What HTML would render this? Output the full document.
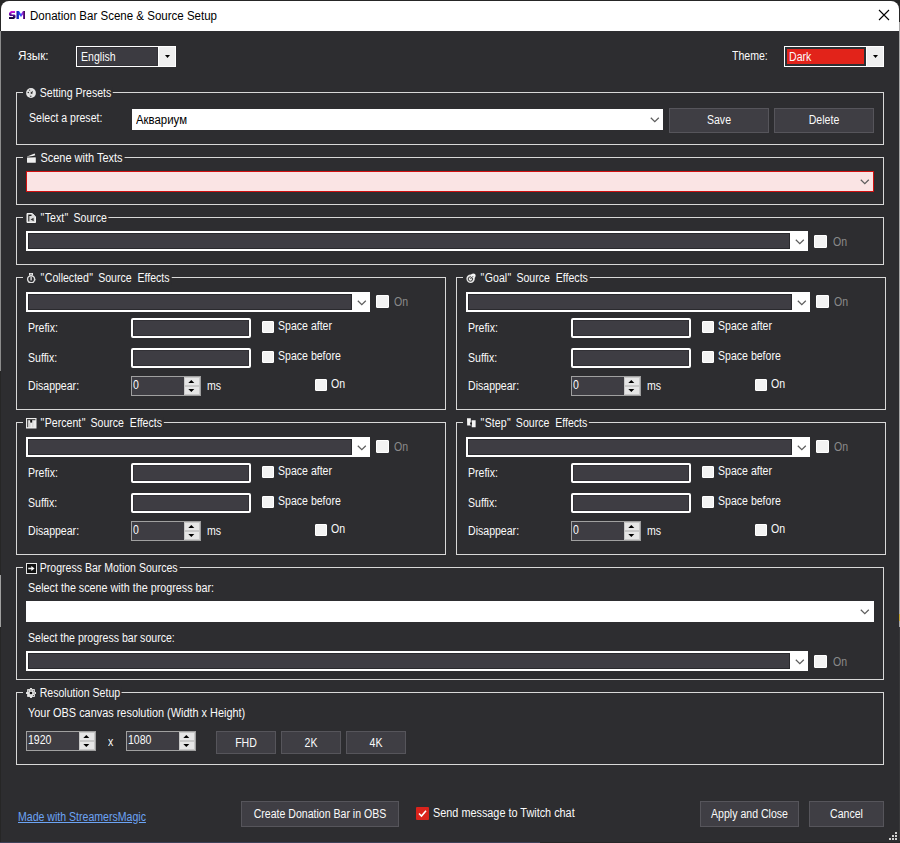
<!DOCTYPE html><html><head><meta charset="utf-8"><style>
html,body{margin:0;padding:0;width:900px;height:843px;overflow:hidden;background:#262626}
.a{position:absolute}
.t{position:absolute;font-family:"Liberation Sans",sans-serif;font-size:12px;line-height:13px;color:#fafafa;white-space:nowrap;transform:scaleX(0.88);transform-origin:0 0}
.tc{transform-origin:50% 0}
.q{letter-spacing:2.5px;margin-left:0.5px}
.q1{margin-left:1px;letter-spacing:0.5px}
#win{position:absolute;left:1px;top:1px;width:898px;height:841px;background:#2d2d30;border-radius:8px 8px 0 0;overflow:hidden}

</style></head><body>
<div class="a" style="left:0px;top:842px;width:540px;height:1px;background:#3d4158;"></div>
<div class="a" style="left:540px;top:842px;width:360px;height:1px;background:#262628;"></div>
<div id="win"></div>
<div class="a" style="left:0px;top:31px;width:1px;height:340px;background:#8c8c8c;"></div>
<div class="a" style="left:0px;top:575px;width:1px;height:52px;background:#a0a0a0;"></div>
<div class="a" style="left:899px;top:22px;width:1px;height:605px;background:#a8a8a8;"></div>
<div class="a" style="left:899px;top:614px;width:1px;height:7px;background:#c8a830;"></div>
<div class="a" style="left:899px;top:627px;width:1px;height:214px;background:#38383a;"></div>
<div class="a" style="left:1px;top:1px;width:898px;height:30px;background:#ffffff;border-radius:8px 8px 0 0;"></div>
<svg class="a" style="left:8px;top:10px" width="18" height="10" viewBox="0 0 18 10"><defs><linearGradient id="gs" x1="0" y1="0" x2="0" y2="1"><stop offset="0" stop-color="#e21ee6"/><stop offset="0.45" stop-color="#5a10a0"/><stop offset="1" stop-color="#0a0628"/></linearGradient><linearGradient id="gm" x1="0" y1="0" x2="1" y2="0"><stop offset="0" stop-color="#1a10a0"/><stop offset="0.45" stop-color="#2060ff"/><stop offset="0.7" stop-color="#9a28e0"/><stop offset="1" stop-color="#300840"/></linearGradient></defs><path d="M7 1 H3 L1 3 V5 L2 6 H5 V7 H1 V9 H6 L7.5 7.5 V5.5 L6.5 4.5 H3.5 V3 H7 Z" fill="url(#gs)"/><path d="M8.5 9 V1 H11 L13 4 L15 1 H17 V9 H15 V4.5 L13 7 L11 4.5 V9 Z" fill="url(#gm)"/></svg>
<div class="t" style="left:30px;top:8px;font-size:12px;line-height:16px;color:#000;transform:scaleX(0.96)">Donation Bar Scene &amp; Source Setup</div>
<svg class="a" style="left:878px;top:9px" width="12" height="12" viewBox="0 0 12 12"><path d="M1 1 L11 11 M11 1 L1 11" stroke="#000" stroke-width="1.1"/></svg>
<div class="t" style="left:18px;top:50.34px;transform:scaleX(0.975);">Язык:</div>
<div class="a" style="left:76px;top:46px;width:100px;height:21px;background:#fff;"></div>
<div class="a" style="left:77px;top:47px;width:81px;height:19px;background:#333237;"></div>
<div class="a" style="left:78px;top:48px;width:79px;height:17px;background:#3c3b41;"></div>
<div class="a" style="left:159px;top:47px;width:16px;height:19px;background:#efefef;"></div>
<svg class="a" style="left:165px;top:55px" width="5" height="3"><path d="M0 0 H5 L2.5 3 Z" fill="#000"/></svg>
<div class="t" style="left:81px;top:51.34px;">English</div>
<div class="t" style="left:732px;top:50.34px;">Theme:</div>
<div class="a" style="left:784px;top:46px;width:100px;height:21px;background:#fff;"></div>
<div class="a" style="left:785px;top:47px;width:81px;height:19px;background:#2b3034;"></div>
<div class="a" style="left:787px;top:49px;width:77px;height:15px;background:#e2231a;"></div>
<div class="a" style="left:867px;top:47px;width:16px;height:19px;background:#efefef;"></div>
<svg class="a" style="left:873px;top:55px" width="5" height="3"><path d="M0 0 H5 L2.5 3 Z" fill="#000"/></svg>
<div class="t" style="left:789px;top:51.34px;">Dark</div>
<div class="a" style="left:16px;top:92px;width:868px;height:53px;border:1px solid #d8d8d8;box-sizing:border-box;"></div>
<div class="t" style="left:23px;top:87.34px;background:#2d2d30;padding-left:19px;padding-right:2px;">Setting Presets</div>
<div class="a" style="left:26px;top:88px;width:10px;height:10px;line-height:0"><svg style="display:block" width="10" height="10" viewBox="0 0 10 10"><circle cx="5" cy="5" r="4.9" fill="#e6e6e6"/><circle cx="2.3" cy="4.5" r="0.8" fill="#2a2a2a"/><circle cx="3.5" cy="2.2" r="0.6" fill="#555"/><path d="M4.2 5 L6.8 2.8 L6.2 6.2 Z" fill="#222"/><circle cx="4.8" cy="8.2" r="0.7" fill="#333"/><path d="M5 1 L3.6 8.6" stroke="#bbb" stroke-width="0.6"/></svg></div>
<div class="t" style="left:29px;top:112.34px;">Select a preset:</div>
<div class="a" style="left:132px;top:109px;width:531px;height:21px;background:#fff;"></div>
<svg class="a" style="left:650px;top:117px" width="10" height="6" viewBox="0 0 10 6"><path d="M0.8 0.8 L4.8 4.6 L8.8 0.8" fill="none" stroke="#5e5e5e" stroke-width="1.25"/></svg>
<div class="t" style="left:136px;top:114.34px;color:#000;transform:scaleX(0.95)">Аквариум</div>
<div class="a" style="left:669px;top:108px;width:100px;height:25px;background:#3f3e44;border:1px solid #56555b;box-sizing:border-box;"></div>
<div class="t tc" style="left:669px;top:114.34px;width:100px;text-align:center">Save</div>
<div class="a" style="left:774px;top:108px;width:100px;height:25px;background:#3f3e44;border:1px solid #56555b;box-sizing:border-box;"></div>
<div class="t tc" style="left:774px;top:114.34px;width:100px;text-align:center">Delete</div>
<div class="a" style="left:16px;top:157px;width:868px;height:48px;border:1px solid #d8d8d8;box-sizing:border-box;"></div>
<div class="t" style="left:23px;top:152.34px;background:#2d2d30;padding-left:19px;padding-right:2px;transform:scaleX(0.915)">Scene with Texts</div>
<div class="a" style="left:26px;top:153px;width:10px;height:10px;line-height:0"><svg style="display:block" width="10" height="10" viewBox="0 0 10 10"><rect x="1" y="4.2" width="8.8" height="5.6" rx="0.6" fill="#f0f0f0"/><path d="M1 3.4 L8.6 0.6 L9.3 2.2 L1.6 4.4 Z" fill="#f0f0f0"/><path d="M1.2 4 L9 3.6" stroke="#222" stroke-width="0.8"/></svg></div>
<div class="a" style="left:26px;top:171px;width:848px;height:21px;background:#fae4e4;border:1px solid #d01010;box-sizing:border-box;"></div>
<svg class="a" style="left:860px;top:179px" width="10" height="6" viewBox="0 0 10 6"><path d="M0.8 0.8 L4.8 4.6 L8.8 0.8" fill="none" stroke="#5e5e5e" stroke-width="1.25"/></svg>
<div class="a" style="left:16px;top:217px;width:868px;height:48px;border:1px solid #d8d8d8;box-sizing:border-box;"></div>
<div class="t" style="left:23px;top:212.34px;background:#2d2d30;padding-left:19px;padding-right:2px;"><span class="q1">"</span>Text<span class="q">"</span> Source</div>
<div class="a" style="left:26px;top:213px;width:10px;height:10px;line-height:0"><svg style="display:block" width="10" height="10" viewBox="0 0 10 10"><path d="M1 0.5 H6.3 L9.5 3.8 V9.5 H1 Z" fill="#dcdcdc" stroke="#f2f2f2" stroke-width="1"/><rect x="2.3" y="1.6" width="3.2" height="1.4" fill="#1a1a1a"/><rect x="2.3" y="3" width="1" height="5.4" fill="#1a1a1a"/><path d="M4.5 6.5 L7.5 4.8 L7.8 8.2 Z" fill="#333"/></svg></div>
<div class="a" style="left:26px;top:231px;width:782px;height:20px;background:#ffffff;"></div>
<div class="a" style="left:28px;top:233px;width:762px;height:16px;background:#2a2a2e;"></div>
<div class="a" style="left:29px;top:234px;width:760px;height:14px;background:#3e3d43;"></div>
<svg class="a" style="left:795px;top:239px" width="10" height="6" viewBox="0 0 10 6"><path d="M0.8 0.8 L4.8 4.6 L8.8 0.8" fill="none" stroke="#5e5e5e" stroke-width="1.25"/></svg>
<div class="a" style="left:814px;top:235px;width:13px;height:13px;background:#f3f3f3;border:1px solid #fff;box-sizing:border-box;border-radius:1px"></div>
<div class="t" style="left:833px;top:236.34px;color:#8a8a8a;">On</div>
<div class="a" style="left:16px;top:277px;width:430px;height:133px;border:1px solid #d8d8d8;box-sizing:border-box;"></div>
<div class="t" style="left:23px;top:272.34px;background:#2d2d30;padding-left:19px;padding-right:2px;"><span class="q1">"</span>Collected<span class="q">"</span> Source&nbsp; Effects</div>
<div class="a" style="left:26px;top:273px;width:10px;height:10px;line-height:0"><svg style="display:block" width="10" height="10" viewBox="0 0 10 10"><rect x="3" y="0" width="4" height="2.4" fill="#e8e8e8"/><rect x="4" y="0.8" width="2" height="1" fill="#888"/><circle cx="5.1" cy="6.3" r="3.5" fill="none" stroke="#dedede" stroke-width="1.4"/><rect x="4.4" y="3.6" width="1.4" height="3.8" fill="#d8d8d8"/><path d="M8.6 6.8 H9.6" stroke="#ccc" stroke-width="1"/></svg></div>
<div class="a" style="left:26px;top:292px;width:344px;height:20px;background:#ffffff;"></div>
<div class="a" style="left:28px;top:294px;width:324px;height:16px;background:#2a2a2e;"></div>
<div class="a" style="left:29px;top:295px;width:322px;height:14px;background:#3e3d43;"></div>
<svg class="a" style="left:357px;top:300px" width="10" height="6" viewBox="0 0 10 6"><path d="M0.8 0.8 L4.8 4.6 L8.8 0.8" fill="none" stroke="#5e5e5e" stroke-width="1.25"/></svg>
<div class="a" style="left:376px;top:295px;width:13px;height:13px;background:#f3f3f3;border:1px solid #fff;box-sizing:border-box;border-radius:1px"></div>
<div class="t" style="left:394px;top:296.34px;color:#8a8a8a;">On</div>
<div class="t" style="left:28px;top:322.34px;">Prefix:</div>
<div class="a" style="left:131px;top:318px;width:120px;height:20px;background:#3e3d43;border:2px solid #fff;border-radius:2px;box-sizing:border-box;box-shadow:inset 0 0 0 1px #323136;"></div>
<div class="a" style="left:262px;top:321px;width:12px;height:12px;background:#f3f3f3;border:1px solid #fff;box-sizing:border-box;border-radius:1px"></div>
<div class="t" style="left:278px;top:320.34px;">Space after</div>
<div class="t" style="left:28px;top:352.34px;">Suffix:</div>
<div class="a" style="left:131px;top:348px;width:120px;height:20px;background:#3e3d43;border:2px solid #fff;border-radius:2px;box-sizing:border-box;box-shadow:inset 0 0 0 1px #323136;"></div>
<div class="a" style="left:262px;top:351px;width:12px;height:12px;background:#f3f3f3;border:1px solid #fff;box-sizing:border-box;border-radius:1px"></div>
<div class="t" style="left:278px;top:350.34px;">Space before</div>
<div class="t" style="left:28px;top:380.34px;">Disappear:</div>
<div class="a" style="left:131px;top:376px;width:70px;height:20px;background:#3e3d43;border:1px solid #a0a0a0;box-sizing:border-box;"></div>
<div class="a" style="left:184px;top:377px;width:16px;height:9px;background:#e6e6e6;border:1px solid #c8c8c8;box-sizing:border-box;"></div>
<div class="a" style="left:184px;top:386px;width:16px;height:9px;background:#e6e6e6;border:1px solid #c8c8c8;box-sizing:border-box;"></div>
<svg class="a" style="left:184px;top:377px" width="16" height="18" viewBox="0 0 16 18"><path d="M4.3 6 L7.3 3 L10.3 6 Z" fill="#000"/><path d="M4.3 12 L7.3 15 L10.3 12 Z" fill="#000"/></svg>
<div class="t" style="left:133px;top:379.34px;">0</div>
<div class="t" style="left:207px;top:380.34px;">ms</div>
<div class="a" style="left:315px;top:379px;width:12px;height:12px;background:#f3f3f3;border:1px solid #fff;box-sizing:border-box;border-radius:1px"></div>
<div class="t" style="left:331px;top:378.34px;">On</div>
<div class="a" style="left:456px;top:277px;width:430px;height:133px;border:1px solid #d8d8d8;box-sizing:border-box;"></div>
<div class="t" style="left:463px;top:272.34px;background:#2d2d30;padding-left:19px;padding-right:2px;"><span class="q1">"</span>Goal<span class="q">"</span> Source&nbsp; Effects</div>
<div class="a" style="left:466px;top:273px;width:10px;height:10px;line-height:0"><svg style="display:block" width="10" height="10" viewBox="0 0 10 10"><circle cx="4.6" cy="5.7" r="4.2" fill="#e8e8e8"/><circle cx="4.4" cy="6" r="2.2" fill="none" stroke="#2a2a2a" stroke-width="0.9"/><circle cx="7.3" cy="2.8" r="2.4" fill="#f4f4f4"/><path d="M4.4 6 L7 3.3" stroke="#2a2a2a" stroke-width="0.9"/></svg></div>
<div class="a" style="left:466px;top:292px;width:344px;height:20px;background:#ffffff;"></div>
<div class="a" style="left:468px;top:294px;width:324px;height:16px;background:#2a2a2e;"></div>
<div class="a" style="left:469px;top:295px;width:322px;height:14px;background:#3e3d43;"></div>
<svg class="a" style="left:797px;top:300px" width="10" height="6" viewBox="0 0 10 6"><path d="M0.8 0.8 L4.8 4.6 L8.8 0.8" fill="none" stroke="#5e5e5e" stroke-width="1.25"/></svg>
<div class="a" style="left:816px;top:295px;width:13px;height:13px;background:#f3f3f3;border:1px solid #fff;box-sizing:border-box;border-radius:1px"></div>
<div class="t" style="left:834px;top:296.34px;color:#8a8a8a;">On</div>
<div class="t" style="left:468px;top:322.34px;">Prefix:</div>
<div class="a" style="left:571px;top:318px;width:120px;height:20px;background:#3e3d43;border:2px solid #fff;border-radius:2px;box-sizing:border-box;box-shadow:inset 0 0 0 1px #323136;"></div>
<div class="a" style="left:702px;top:321px;width:12px;height:12px;background:#f3f3f3;border:1px solid #fff;box-sizing:border-box;border-radius:1px"></div>
<div class="t" style="left:718px;top:320.34px;">Space after</div>
<div class="t" style="left:468px;top:352.34px;">Suffix:</div>
<div class="a" style="left:571px;top:348px;width:120px;height:20px;background:#3e3d43;border:2px solid #fff;border-radius:2px;box-sizing:border-box;box-shadow:inset 0 0 0 1px #323136;"></div>
<div class="a" style="left:702px;top:351px;width:12px;height:12px;background:#f3f3f3;border:1px solid #fff;box-sizing:border-box;border-radius:1px"></div>
<div class="t" style="left:718px;top:350.34px;">Space before</div>
<div class="t" style="left:468px;top:380.34px;">Disappear:</div>
<div class="a" style="left:571px;top:376px;width:70px;height:20px;background:#3e3d43;border:1px solid #a0a0a0;box-sizing:border-box;"></div>
<div class="a" style="left:624px;top:377px;width:16px;height:9px;background:#e6e6e6;border:1px solid #c8c8c8;box-sizing:border-box;"></div>
<div class="a" style="left:624px;top:386px;width:16px;height:9px;background:#e6e6e6;border:1px solid #c8c8c8;box-sizing:border-box;"></div>
<svg class="a" style="left:624px;top:377px" width="16" height="18" viewBox="0 0 16 18"><path d="M4.3 6 L7.3 3 L10.3 6 Z" fill="#000"/><path d="M4.3 12 L7.3 15 L10.3 12 Z" fill="#000"/></svg>
<div class="t" style="left:573px;top:379.34px;">0</div>
<div class="t" style="left:647px;top:380.34px;">ms</div>
<div class="a" style="left:755px;top:379px;width:12px;height:12px;background:#f3f3f3;border:1px solid #fff;box-sizing:border-box;border-radius:1px"></div>
<div class="t" style="left:771px;top:378.34px;">On</div>
<div class="a" style="left:16px;top:422px;width:430px;height:133px;border:1px solid #d8d8d8;box-sizing:border-box;"></div>
<div class="t" style="left:23px;top:417.34px;background:#2d2d30;padding-left:19px;padding-right:2px;"><span class="q1">"</span>Percent<span class="q">"</span> Source&nbsp; Effects</div>
<div class="a" style="left:26px;top:418px;width:10px;height:10px;line-height:0"><svg style="display:block" width="11" height="11" viewBox="0 0 11 11"><rect x="0" y="0" width="10.5" height="10.5" fill="#ececec"/><rect x="1.2" y="1.2" width="8.2" height="1" fill="#222"/><rect x="1.2" y="1.2" width="1" height="8" fill="#333"/><rect x="4.2" y="2" width="2" height="2.6" fill="#111"/><rect x="3.6" y="4.6" width="0.6" height="4.6" fill="#aaa"/><rect x="6.6" y="2.2" width="0.6" height="7" fill="#bbb"/></svg></div>
<div class="a" style="left:26px;top:437px;width:344px;height:20px;background:#ffffff;"></div>
<div class="a" style="left:28px;top:439px;width:324px;height:16px;background:#2a2a2e;"></div>
<div class="a" style="left:29px;top:440px;width:322px;height:14px;background:#3e3d43;"></div>
<svg class="a" style="left:357px;top:445px" width="10" height="6" viewBox="0 0 10 6"><path d="M0.8 0.8 L4.8 4.6 L8.8 0.8" fill="none" stroke="#5e5e5e" stroke-width="1.25"/></svg>
<div class="a" style="left:376px;top:440px;width:13px;height:13px;background:#f3f3f3;border:1px solid #fff;box-sizing:border-box;border-radius:1px"></div>
<div class="t" style="left:394px;top:441.34px;color:#8a8a8a;">On</div>
<div class="t" style="left:28px;top:467.34px;">Prefix:</div>
<div class="a" style="left:131px;top:463px;width:120px;height:20px;background:#3e3d43;border:2px solid #fff;border-radius:2px;box-sizing:border-box;box-shadow:inset 0 0 0 1px #323136;"></div>
<div class="a" style="left:262px;top:466px;width:12px;height:12px;background:#f3f3f3;border:1px solid #fff;box-sizing:border-box;border-radius:1px"></div>
<div class="t" style="left:278px;top:465.34px;">Space after</div>
<div class="t" style="left:28px;top:497.34px;">Suffix:</div>
<div class="a" style="left:131px;top:493px;width:120px;height:20px;background:#3e3d43;border:2px solid #fff;border-radius:2px;box-sizing:border-box;box-shadow:inset 0 0 0 1px #323136;"></div>
<div class="a" style="left:262px;top:496px;width:12px;height:12px;background:#f3f3f3;border:1px solid #fff;box-sizing:border-box;border-radius:1px"></div>
<div class="t" style="left:278px;top:495.34px;">Space before</div>
<div class="t" style="left:28px;top:525.34px;">Disappear:</div>
<div class="a" style="left:131px;top:521px;width:70px;height:20px;background:#3e3d43;border:1px solid #a0a0a0;box-sizing:border-box;"></div>
<div class="a" style="left:184px;top:522px;width:16px;height:9px;background:#e6e6e6;border:1px solid #c8c8c8;box-sizing:border-box;"></div>
<div class="a" style="left:184px;top:531px;width:16px;height:9px;background:#e6e6e6;border:1px solid #c8c8c8;box-sizing:border-box;"></div>
<svg class="a" style="left:184px;top:522px" width="16" height="18" viewBox="0 0 16 18"><path d="M4.3 6 L7.3 3 L10.3 6 Z" fill="#000"/><path d="M4.3 12 L7.3 15 L10.3 12 Z" fill="#000"/></svg>
<div class="t" style="left:133px;top:524.34px;">0</div>
<div class="t" style="left:207px;top:525.34px;">ms</div>
<div class="a" style="left:315px;top:524px;width:12px;height:12px;background:#f3f3f3;border:1px solid #fff;box-sizing:border-box;border-radius:1px"></div>
<div class="t" style="left:331px;top:523.34px;">On</div>
<div class="a" style="left:456px;top:422px;width:430px;height:133px;border:1px solid #d8d8d8;box-sizing:border-box;"></div>
<div class="t" style="left:463px;top:417.34px;background:#2d2d30;padding-left:19px;padding-right:2px;"><span class="q1">"</span>Step<span class="q">"</span> Source&nbsp; Effects</div>
<div class="a" style="left:466px;top:418px;width:10px;height:10px;line-height:0"><svg style="display:block" width="10" height="10" viewBox="0 0 10 10"><path d="M1 0.3 H4.8 V7.6 H1.2 Z" fill="#f4f4f4"/><path d="M5.6 2.3 H9.6 V9.2 H5.8 Z" fill="#f4f4f4"/><rect x="4.2" y="4.5" width="1.6" height="2" fill="#111"/></svg></div>
<div class="a" style="left:466px;top:437px;width:344px;height:20px;background:#ffffff;"></div>
<div class="a" style="left:468px;top:439px;width:324px;height:16px;background:#2a2a2e;"></div>
<div class="a" style="left:469px;top:440px;width:322px;height:14px;background:#3e3d43;"></div>
<svg class="a" style="left:797px;top:445px" width="10" height="6" viewBox="0 0 10 6"><path d="M0.8 0.8 L4.8 4.6 L8.8 0.8" fill="none" stroke="#5e5e5e" stroke-width="1.25"/></svg>
<div class="a" style="left:816px;top:440px;width:13px;height:13px;background:#f3f3f3;border:1px solid #fff;box-sizing:border-box;border-radius:1px"></div>
<div class="t" style="left:834px;top:441.34px;color:#8a8a8a;">On</div>
<div class="t" style="left:468px;top:467.34px;">Prefix:</div>
<div class="a" style="left:571px;top:463px;width:120px;height:20px;background:#3e3d43;border:2px solid #fff;border-radius:2px;box-sizing:border-box;box-shadow:inset 0 0 0 1px #323136;"></div>
<div class="a" style="left:702px;top:466px;width:12px;height:12px;background:#f3f3f3;border:1px solid #fff;box-sizing:border-box;border-radius:1px"></div>
<div class="t" style="left:718px;top:465.34px;">Space after</div>
<div class="t" style="left:468px;top:497.34px;">Suffix:</div>
<div class="a" style="left:571px;top:493px;width:120px;height:20px;background:#3e3d43;border:2px solid #fff;border-radius:2px;box-sizing:border-box;box-shadow:inset 0 0 0 1px #323136;"></div>
<div class="a" style="left:702px;top:496px;width:12px;height:12px;background:#f3f3f3;border:1px solid #fff;box-sizing:border-box;border-radius:1px"></div>
<div class="t" style="left:718px;top:495.34px;">Space before</div>
<div class="t" style="left:468px;top:525.34px;">Disappear:</div>
<div class="a" style="left:571px;top:521px;width:70px;height:20px;background:#3e3d43;border:1px solid #a0a0a0;box-sizing:border-box;"></div>
<div class="a" style="left:624px;top:522px;width:16px;height:9px;background:#e6e6e6;border:1px solid #c8c8c8;box-sizing:border-box;"></div>
<div class="a" style="left:624px;top:531px;width:16px;height:9px;background:#e6e6e6;border:1px solid #c8c8c8;box-sizing:border-box;"></div>
<svg class="a" style="left:624px;top:522px" width="16" height="18" viewBox="0 0 16 18"><path d="M4.3 6 L7.3 3 L10.3 6 Z" fill="#000"/><path d="M4.3 12 L7.3 15 L10.3 12 Z" fill="#000"/></svg>
<div class="t" style="left:573px;top:524.34px;">0</div>
<div class="t" style="left:647px;top:525.34px;">ms</div>
<div class="a" style="left:755px;top:524px;width:12px;height:12px;background:#f3f3f3;border:1px solid #fff;box-sizing:border-box;border-radius:1px"></div>
<div class="t" style="left:771px;top:523.34px;">On</div>
<div class="a" style="left:16px;top:567px;width:868px;height:113px;border:1px solid #d8d8d8;box-sizing:border-box;"></div>
<div class="t" style="left:23px;top:562.34px;background:#2d2d30;padding-left:19px;padding-right:2px;">Progress Bar Motion Sources</div>
<div class="a" style="left:26px;top:563px;width:10px;height:10px;line-height:0"><svg style="display:block" width="11" height="11" viewBox="0 0 11 11"><rect x="0.5" y="0.5" width="10" height="10" fill="#111" stroke="#e6e6e6" stroke-width="1"/><path d="M2.2 5.5 H6.5" stroke="#eee" stroke-width="1.6"/><path d="M5.3 3 L8.6 5.5 L5.3 8 Z" fill="#f4f4f4"/></svg></div>
<div class="t" style="left:28px;top:582.34px;transform:scaleX(0.897);">Select the scene with the progress bar:</div>
<div class="a" style="left:26px;top:601px;width:848px;height:21px;background:#fff;"></div>
<svg class="a" style="left:860px;top:609px" width="10" height="6" viewBox="0 0 10 6"><path d="M0.8 0.8 L4.8 4.6 L8.8 0.8" fill="none" stroke="#5e5e5e" stroke-width="1.25"/></svg>
<div class="t" style="left:28px;top:632.34px;">Select the progress bar source:</div>
<div class="a" style="left:26px;top:651px;width:782px;height:20px;background:#ffffff;"></div>
<div class="a" style="left:28px;top:653px;width:762px;height:16px;background:#2a2a2e;"></div>
<div class="a" style="left:29px;top:654px;width:760px;height:14px;background:#3e3d43;"></div>
<svg class="a" style="left:795px;top:659px" width="10" height="6" viewBox="0 0 10 6"><path d="M0.8 0.8 L4.8 4.6 L8.8 0.8" fill="none" stroke="#5e5e5e" stroke-width="1.25"/></svg>
<div class="a" style="left:814px;top:655px;width:13px;height:13px;background:#f3f3f3;border:1px solid #fff;box-sizing:border-box;border-radius:1px"></div>
<div class="t" style="left:833px;top:656.34px;color:#8a8a8a;">On</div>
<div class="a" style="left:16px;top:692px;width:868px;height:73px;border:1px solid #d8d8d8;box-sizing:border-box;"></div>
<div class="t" style="left:23px;top:687.34px;background:#2d2d30;padding-left:19px;padding-right:2px;">Resolution Setup</div>
<div class="a" style="left:26px;top:688px;width:10px;height:10px;line-height:0"><svg style="display:block" width="10" height="10" viewBox="0 0 10 10"><circle cx="5" cy="5" r="4.2" fill="#e0e0e0"/><circle cx="5" cy="0.9" r="1.1" fill="#e8e8e8"/><circle cx="5" cy="9.1" r="1.1" fill="#e8e8e8"/><circle cx="0.9" cy="5" r="1.1" fill="#e8e8e8"/><circle cx="9.1" cy="5" r="1.1" fill="#e8e8e8"/><circle cx="2.1" cy="2.1" r="1.1" fill="#e8e8e8"/><circle cx="7.9" cy="2.1" r="1.1" fill="#e8e8e8"/><circle cx="2.1" cy="7.9" r="1.1" fill="#e8e8e8"/><circle cx="7.9" cy="7.9" r="1.1" fill="#e8e8e8"/><circle cx="5" cy="5" r="1.3" fill="#111"/><circle cx="5" cy="1.9" r="0.5" fill="#222"/><circle cx="7.4" cy="2.8" r="0.5" fill="#333"/><circle cx="8.1" cy="5" r="0.5" fill="#333"/><circle cx="7.4" cy="7.5" r="0.5" fill="#222"/><circle cx="2.5" cy="3" r="0.5" fill="#555"/></svg></div>
<div class="t" style="left:28px;top:707.34px;transform:scaleX(0.909);">Your OBS canvas resolution (Width x Height)</div>
<div class="a" style="left:26px;top:731px;width:70px;height:20px;background:#3e3d43;border:1px solid #a0a0a0;box-sizing:border-box;"></div>
<div class="a" style="left:79px;top:732px;width:16px;height:9px;background:#e6e6e6;border:1px solid #c8c8c8;box-sizing:border-box;"></div>
<div class="a" style="left:79px;top:741px;width:16px;height:9px;background:#e6e6e6;border:1px solid #c8c8c8;box-sizing:border-box;"></div>
<svg class="a" style="left:79px;top:732px" width="16" height="18" viewBox="0 0 16 18"><path d="M4.3 6 L7.3 3 L10.3 6 Z" fill="#000"/><path d="M4.3 12 L7.3 15 L10.3 12 Z" fill="#000"/></svg>
<div class="t" style="left:28px;top:734.34px;">1920</div>
<div class="t" style="left:108px;top:736.34px;">x</div>
<div class="a" style="left:126px;top:731px;width:70px;height:20px;background:#3e3d43;border:1px solid #a0a0a0;box-sizing:border-box;"></div>
<div class="a" style="left:179px;top:732px;width:16px;height:9px;background:#e6e6e6;border:1px solid #c8c8c8;box-sizing:border-box;"></div>
<div class="a" style="left:179px;top:741px;width:16px;height:9px;background:#e6e6e6;border:1px solid #c8c8c8;box-sizing:border-box;"></div>
<svg class="a" style="left:179px;top:732px" width="16" height="18" viewBox="0 0 16 18"><path d="M4.3 6 L7.3 3 L10.3 6 Z" fill="#000"/><path d="M4.3 12 L7.3 15 L10.3 12 Z" fill="#000"/></svg>
<div class="t" style="left:128px;top:734.34px;">1080</div>
<div class="a" style="left:216px;top:731px;width:60px;height:23px;background:#3f3e44;border:1px solid #56555b;box-sizing:border-box;"></div>
<div class="t tc" style="left:216px;top:737.34px;width:60px;text-align:center">FHD</div>
<div class="a" style="left:281px;top:731px;width:60px;height:23px;background:#3f3e44;border:1px solid #56555b;box-sizing:border-box;"></div>
<div class="t tc" style="left:281px;top:737.34px;width:60px;text-align:center">2K</div>
<div class="a" style="left:346px;top:731px;width:60px;height:23px;background:#3f3e44;border:1px solid #56555b;box-sizing:border-box;"></div>
<div class="t tc" style="left:346px;top:737.34px;width:60px;text-align:center">4K</div>
<div class="t" style="left:18px;top:810.5px;color:#6ca4f5;text-decoration:underline">Made with StreamersMagic</div>
<div class="a" style="left:241px;top:801px;width:158px;height:26px;background:#3f3e44;border:1px solid #56555b;box-sizing:border-box;"></div>
<div class="t tc" style="left:241px;top:808.34px;width:158px;text-align:center">Create Donation Bar in OBS</div>
<div class="a" style="left:416px;top:807px;width:13px;height:13px;background:#d9231c;border-radius:1px"></div>
<svg class="a" style="left:416px;top:807px" width="13" height="13" viewBox="0 0 13 13"><path d="M3 6.5 L5.5 9 L10 3.8" fill="none" stroke="#fff" stroke-width="1.6"/></svg>
<div class="t" style="left:433px;top:807.34px;transform:scaleX(0.905);">Send message to Twitch chat</div>
<div class="a" style="left:700px;top:801px;width:99px;height:26px;background:#3f3e44;border:1px solid #56555b;box-sizing:border-box;"></div>
<div class="t tc" style="left:700px;top:808.34px;width:99px;text-align:center">Apply and Close</div>
<div class="a" style="left:809px;top:801px;width:75px;height:26px;background:#3f3e44;border:1px solid #56555b;box-sizing:border-box;"></div>
<div class="t tc" style="left:809px;top:808.34px;width:75px;text-align:center">Cancel</div>
<div class="a" style="left:895px;top:832px;width:2px;height:2px;background:#d0d0d0;"></div>
<div class="a" style="left:892px;top:835px;width:2px;height:2px;background:#d0d0d0;"></div>
<div class="a" style="left:895px;top:835px;width:2px;height:2px;background:#d0d0d0;"></div>
<div class="a" style="left:889px;top:838px;width:2px;height:2px;background:#d0d0d0;"></div>
<div class="a" style="left:892px;top:838px;width:2px;height:2px;background:#d0d0d0;"></div>
<div class="a" style="left:895px;top:838px;width:2px;height:2px;background:#d0d0d0;"></div>
</body></html>
